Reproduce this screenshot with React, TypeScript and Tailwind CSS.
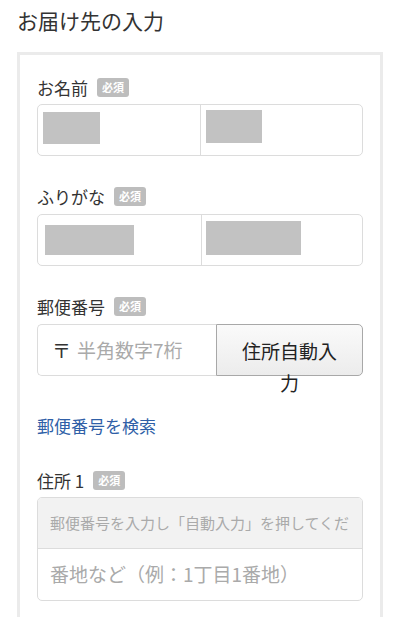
import React from "react";

const Badge = () => (
  <span className="ml-[9px] inline-flex h-[19px] w-[32px] items-center justify-center rounded-[3px] bg-[#bdbdbd] text-[11px] font-bold leading-none text-white">
    必須
  </span>
);

const Label = ({ text }: { text: string }) => (
  <div className="flex h-[26px] items-center text-[17px] leading-none text-[#333]">
    <span>{text}</span>
    <Badge />
  </div>
);

export default function App() {
  return (
    <div
      className="w-[400px] bg-white px-[17px]"
      style={{ fontFamily: '"Noto Sans CJK JP", "Noto Sans", sans-serif' }}
    >
      <h1 className="pt-[5px] text-[21px] font-normal leading-[30px] text-[#333]">お届け先の入力</h1>
      <div className="mt-[17px] border-[3px] border-[#ebebeb] px-[17px] pt-[19px] pb-[40px]">
        {/* お名前 */}
        <Label text="お名前" />
        <div className="mt-[4px] flex h-[52px] rounded-[5px] border border-[#dcdcdc]">
          <div className="flex-1 border-r border-[#dcdcdc] pl-[5px] pt-[7px]">
            <div className="h-[32px] w-[57px] bg-[#c2c2c2]" />
          </div>
          <div className="flex-1 pl-[5px] pt-[5px]">
            <div className="h-[33px] w-[56px] bg-[#c2c2c2]" />
          </div>
        </div>

        {/* ふりがな */}
        <div className="mt-[27px]">
          <Label text="ふりがな" />
        </div>
        <div className="mt-[5px] flex h-[52px] rounded-[5px] border border-[#dcdcdc]">
          <div className="flex-1 border-r border-[#dcdcdc] pl-[7px] pt-[10px]">
            <div className="h-[30px] w-[89px] bg-[#c2c2c2]" />
          </div>
          <div className="flex-1 pl-[4px] pt-[6px]">
            <div className="h-[34px] w-[95px] bg-[#c2c2c2]" />
          </div>
        </div>

        {/* 郵便番号 */}
        <div className="mt-[27px]">
          <Label text="郵便番号" />
        </div>
        <div className="mt-[5px] flex h-[52px]">
          <div className="flex w-[179px] items-center rounded-l-[5px] border border-r-0 border-[#dcdcdc] pl-[14px] text-[19px]">
            <span className="text-[#333]">〒</span>
            <span className="ml-[6px] text-[#aaa]">半角数字7桁</span>
          </div>
          <button className="h-[52px] flex-1 self-start rounded-r-[5px] border border-[#a8a8a8] bg-gradient-to-b from-[#fafafa] to-[#ececec] px-[22px] pt-[10px] text-[19px] leading-[32px] text-[#222] align-top">
            <span className="block">住所自動入力</span>
          </button>
        </div>

        {/* link */}
        <div className="mt-[38px] text-[17px] leading-[24px] text-[#2f5fa7]">郵便番号を検索</div>

        {/* 住所1 */}
        <div className="mt-[29px]">
          <Label text="住所 1" />
        </div>
        <div className="mt-[4px] overflow-hidden rounded-[5px] border border-[#dcdcdc]">
          <div className="flex h-[51px] items-center border-b border-[#dcdcdc] bg-[#f2f2f2] px-[12px] text-[15px] text-[#aaa]">
            <div className="w-full overflow-hidden whitespace-nowrap">
              郵便番号を入力し「自動入力」を押してください
            </div>
          </div>
          <div className="flex h-[51px] items-center pl-[12px] text-[19px] text-[#aaa]">
            番地など（例：1丁目1番地）
          </div>
        </div>
      </div>
    </div>
  );
}
